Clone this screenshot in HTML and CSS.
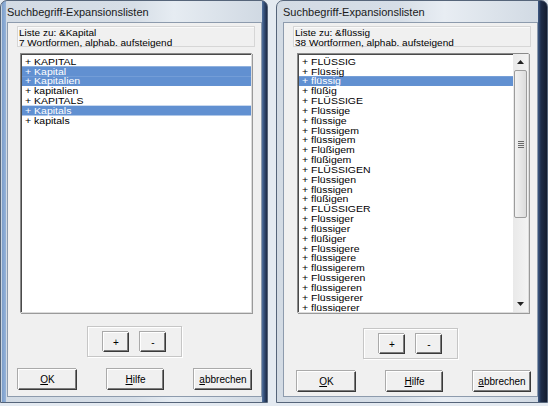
FILE: index.html
```html
<!DOCTYPE html>
<html lang="de">
<head>
  <meta charset="UTF-8" />
  <title>Suchbegriff-Expansionslisten</title>
  <link rel="stylesheet" href="styles.css">
</head>
<body>
  <div class="desk">
    <div class="window win-left">
      <div class="titlebar">Suchbegriff-Expansionslisten</div>
      <div class="client">
        <div class="info">
          <div class="info-text">Liste zu: &amp;Kapital<br>7 Wortformen, alphab. aufsteigend</div>
        </div>
        <div class="listbox">
          <ul class="items">
            <li>+ KAPITAL</li>
            <li class="sel">+ Kapital</li>
            <li class="sel">+ Kapitalien</li>
            <li>+ kapitalien</li>
            <li>+ KAPITALS</li>
            <li class="sel">+ Kapitals</li>
            <li>+ kapitals</li>
          </ul>
        </div>
        <div class="pm">
          <button class="btn small">+</button>
          <button class="btn small">-</button>
        </div>
        <div class="actions">
          <button class="btn ok"><u>O</u>K</button>
          <button class="btn help"><u>H</u>ilfe</button>
          <button class="btn cancel"><u>a</u>bbrechen</button>
        </div>
      </div>
    </div>

    <div class="window win-right">
      <div class="titlebar">Suchbegriff-Expansionslisten</div>
      <div class="client">
        <div class="info">
          <div class="info-text">Liste zu: &amp;flüssig<br>38 Wortformen, alphab. aufsteigend</div>
        </div>
        <div class="listbox">
          <ul class="items">
            <li>+ FLÜSSIG</li>
            <li>+ Flüssig</li>
            <li class="sel">+ flüssig</li>
            <li>+ flüßig</li>
            <li>+ FLÜSSIGE</li>
            <li>+ Flüssige</li>
            <li>+ flüssige</li>
            <li>+ Flüssigem</li>
            <li>+ flüssigem</li>
            <li>+ Flüßigem</li>
            <li>+ flüßigem</li>
            <li>+ FLÜSSIGEN</li>
            <li>+ Flüssigen</li>
            <li>+ flüssigen</li>
            <li>+ flüßigen</li>
            <li>+ FLÜSSIGER</li>
            <li>+ Flüssiger</li>
            <li>+ flüssiger</li>
            <li>+ flüßiger</li>
            <li>+ Flüssigere</li>
            <li>+ flüssigere</li>
            <li>+ flüssigerem</li>
            <li>+ Flüssigeren</li>
            <li>+ flüssigeren</li>
            <li>+ Flüssigerer</li>
            <li>+ flüssigerer</li>
          </ul>
          <div class="scrollbar">
            <div class="arrow">
              <svg width="7" height="4" viewBox="0 0 7 4"><path d="M0 4 L3.5 0 L7 4 Z" fill="#222"/></svg>
            </div>
            <div class="track">
              <div class="thumb"><span class="grip"></span></div>
            </div>
            <div class="arrow">
              <svg width="7" height="4" viewBox="0 0 7 4"><path d="M0 0 L7 0 L3.5 4 Z" fill="#222"/></svg>
            </div>
          </div>
        </div>
        <div class="pm">
          <button class="btn small">+</button>
          <button class="btn small">-</button>
        </div>
        <div class="actions">
          <button class="btn ok"><u>O</u>K</button>
          <button class="btn help"><u>H</u>ilfe</button>
          <button class="btn cancel"><u>a</u>bbrechen</button>
        </div>
      </div>
    </div>
  </div>
</body>
</html>
```

FILE: styles.css
```css
body {
  margin: 0;
  background-color: #e4eaf1;
  font-family: 'Liberation Sans', Arial, sans-serif;
  color: #000;
}
.desk {
  display: flex;
  gap: 8px;
  height: 406px;
}
.window {
  display: flex;
  flex-direction: column;
  box-sizing: border-box;
  height: 403px;
  padding: 0 5px 5px 6px;
  border: 1px solid #56657a;
  border-radius: 7px 7px 0 0;
}
.win-left {
  width: 268px;
  background:
    linear-gradient(to right, #c9d5e1 0, #c9d5e1 1px, #7b9dca 1px, #96b4da 5px, transparent 5px),
    linear-gradient(to left, #1d2a44 0, #35507a 3px, #53739f 5px, transparent 5px),
    linear-gradient(to right, #d3dbe4 0, #d6dee7 50%, #e6ecf2 65%, #cfd8e2 100%);
}
.win-right {
  width: 272px;
  padding-right: 9px;
  background:
    linear-gradient(to left, #141d30 0, #1f2d49 6px, #3e5a85 9px, transparent 9px),
    linear-gradient(to right, #d3dbe4 0, #d6dee7 45%, #e8edf3 62%, #cfd8e2 100%);
}
.titlebar {
  height: 21px;
  line-height: 22px;
  font-size: 11px;
  color: #1a1a1a;
  white-space: nowrap;
}
.client {
  flex: 1;
  background-color: #f0f0f0;
  border: 1px solid #8d9bad;
}
.info {
  box-sizing: border-box;
  width: 238px;
  height: 21px;
  margin: 3px 0 0 9px;
  padding: 1px 0 0 1px;
  border: 1px solid #d6d6d6;
  box-shadow: inset 1px 1px #fafafa;
}
/* the dialog font is drawn squat, so the text is squeezed vertically */
.info-text {
  font-size: 10px;
  line-height: 11.5px;
  white-space: nowrap;
  transform: scaleY(0.87);
  transform-origin: top left;
}
.listbox {
  display: flex;
  box-sizing: border-box;
  width: 232px;
  height: 260px;
  margin: 6px 0 0 12px;
  background-color: #fff;
  border: 1px solid;
  border-color: #8a8a8a #dcdcdc #dcdcdc #8a8a8a;
  box-shadow: inset 1px 1px #4a4a4a, 1px 1px #9a9a9a;
  overflow: hidden;
}
.win-right .listbox {
  margin-left: 13px;
}
.items {
  flex: 1;
  align-self: flex-start;
  list-style: none;
  margin: 0;
  padding: 3px 0 0 1px;
  font-size: 10.5px;
  transform: scaleY(0.82);
  transform-origin: top left;
}
.items li {
  height: 12px;
  line-height: 12px;
  padding-left: 3px;
  white-space: nowrap;
}
.items li.sel {
  background-color: #6190d1;
  color: #fff;
}
.scrollbar {
  display: flex;
  flex-direction: column;
  width: 15px;
  background: linear-gradient(to right, #e9e9e9, #f3f3f3);
}
.arrow {
  height: 16px;
  display: flex;
  align-items: center;
  justify-content: center;
}
.track {
  flex: 1;
}
.thumb {
  display: flex;
  align-items: center;
  justify-content: center;
  box-sizing: border-box;
  height: 148px;
  margin: 0 1px;
  border: 1px solid #9c9c9c;
  border-radius: 2px;
  background: linear-gradient(to right, #f2f2f2, #dcdcdc);
}
.grip {
  width: 6px;
  height: 7px;
  background: repeating-linear-gradient(to bottom, #6a6a6a 0, #6a6a6a 1px, transparent 1px, transparent 2px);
}
.pm {
  display: flex;
  gap: 11px;
  box-sizing: border-box;
  width: 95px;
  height: 31px;
  margin: 13px auto 0;
  padding: 5px 0 0 15px;
  border: 1px solid #c6c6c6;
  box-shadow: inset 1px 1px #fff, 1px 1px #fff;
}
.win-right .pm {
  margin-top: 15px;
}
.actions {
  display: flex;
  gap: 30px;
  margin-top: 12px;
  padding-left: 10px;
}
.win-right .actions {
  padding-left: 13px;
}
.btn {
  box-sizing: border-box;
  height: 21px;
  padding: 0;
  background-color: #f0f0f0;
  border: 1px solid;
  border-color: #fff #3a3a3a #3a3a3a #fff;
  box-shadow: inset -1px -1px #7c7c7c, -1px -1px #aaa;
  font-family: 'Liberation Sans', Arial, sans-serif;
  font-size: 10px;
  color: #000;
}
.btn.small {
  width: 26px;
  height: 20px;
}
.ok {
  width: 59px;
}
.help {
  width: 57px;
}
.cancel {
  width: 58px;
}
```
